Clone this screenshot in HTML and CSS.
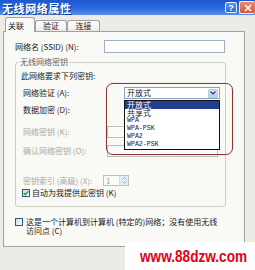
FILE: index.html
```html
<!DOCTYPE html>
<html>
<head>
<meta charset="utf-8">
<link rel="stylesheet" href="styles.css">
</head>
<body>
<div class="win">
  <div class="titlebar">
    <span class="title">无线网络属性</span>
    <span class="tb-btns">
      <span class="tbtn help">?</span>
      <span class="tbtn close"><svg width="14" height="12" viewBox="0 0 14 12"><path d="M4 3 L10 9 M10 3 L4 9" stroke="#fff" stroke-width="1.6" fill="none"/></svg></span>
    </span>
  </div>
  <div class="client">
    <div class="tabs">
      <div class="tab active">关联</div>
      <div class="tab t2">验证</div>
      <div class="tab t3">连接</div>
    </div>
    <div class="panel">
      <div class="row ssid">
        <span class="lbl w-ssid">网络名 (SSID) (N):</span>
        <span class="textbox ssid-box"></span>
      </div>
      <fieldset class="group">
        <legend>无线网络密钥</legend>
        <div class="line">此网络要求下列密钥:</div>
        <div class="row r2">
          <span class="lbl w-combo">网络验证 (A):</span>
          <span class="combo">开放式<span class="arrow"><svg width="6" height="4" viewBox="0 0 6 4"><path d="M0.5 0.5 L3 3 L5.5 0.5" stroke="#2a3a66" stroke-width="1.2" fill="none"/></svg></span></span>
        </div>
        <div class="row r3">
          <span class="lbl w-combo">数据加密 (D):</span>
          <span class="combo"><span class="arrow"></span></span>
        </div>
        <div class="row r4">
          <span class="lbl w-tb dis">网络密钥 (K):</span>
          <span class="textbox dbox"></span>
        </div>
        <div class="row r5">
          <span class="lbl w-tb dis">确认网络密钥 (O):</span>
          <span class="textbox dbox"></span>
        </div>
        <div class="row r6">
          <span class="lbl w-spin dis">密钥索引 (高级) (X):</span>
          <span class="spin"><span class="spin-val">1</span><span class="spin-btn"><svg width="7" height="9" viewBox="0 0 7 9"><path d="M1.5 3.5 L3.5 1.5 L5.5 3.5 M1.5 5.5 L3.5 7.5 L5.5 5.5" stroke="#9fb2d8" stroke-width="1" fill="none"/></svg></span></span>
        </div>
        <div class="row r7">
          <span class="cb"><svg width="6" height="6" viewBox="0 0 6 6"><path d="M0.8 3 L2.4 4.6 L5.3 1.2" stroke="#21a121" stroke-width="1.4" fill="none"/></svg></span>
          <span class="cbtext">自动为我提供此密钥 (K)</span>
        </div>
      </fieldset>
      <div class="adhoc">
        <span class="cb"></span>
        <span class="adtext">这是一个计算机到计算机 (特定的)网络；没有使用无线<br>访问点 (C)</span>
      </div>
    </div>
  </div>
  <div class="list">
    <div class="item sel">开放式</div>
    <div class="item">共享式</div>
    <div class="item lat">WPA</div>
    <div class="item lat">WPA-PSK</div>
    <div class="item lat">WPA2</div>
    <div class="item lat">WPA2-PSK</div>
  </div>
  <div class="annot"></div>
  <div class="wm"><span>www.88dzw.com</span></div>
</div>
</body>
</html>
```

FILE: styles.css
```css
* { box-sizing: border-box; }
html, body { margin: 0; padding: 0; }
body {
  width: 255px;
  height: 270px;
  overflow: hidden;
  font-family: "Noto Sans CJK SC", sans-serif;
  font-size: 8px;
  color: #1a1a1a;
}
.win {
  position: relative;
  width: 255px;
  height: 270px;
  background: #ecebe5;
  overflow: hidden;
}
.titlebar {
  height: 15px;
  display: flex;
  align-items: flex-start;
  justify-content: space-between;
  padding-left: 2px;
  background: linear-gradient(#1c58d0, #2a6ade 55%, #5a8fe8);
}
.title {
  display: block;
  height: 15px;
  color: #fff;
  font-weight: bold;
  font-size: 11px;
  line-height: 16px;
  letter-spacing: 0.6px;
  text-shadow: 1px 1px 0 #0b3390;
  white-space: nowrap;
}
.tb-btns {
  display: flex;
  gap: 2px;
  margin-top: 1px;
}
.tbtn {
  display: flex;
  align-items: center;
  justify-content: center;
  height: 12px;
  border: 1px solid #e8eefa;
  border-radius: 2px;
  color: #fff;
  font: bold 9px/10px "Liberation Sans", sans-serif;
}
.help {
  width: 12px;
  margin-top: 1px;
  height: 11px;
  background: linear-gradient(#5a92f0, #2f6ae0);
}
.close {
  width: 16px;
  height: 13px;
  border-right: none;
  background: linear-gradient(#ee8a6a, #d9573a);
}
.client {
  padding: 2px 0 0 3px;
}
.tabs {
  display: flex;
  align-items: flex-end;
  height: 15px;
  margin-bottom: -1px;
  padding-left: 2px;
  position: relative;
  z-index: 1;
}
.tab {
  height: 11px;
  margin-bottom: 1px;
  border: 1px solid #9ba3a6;
  border-bottom: none;
  border-radius: 3px 3px 0 0;
  background: linear-gradient(#ffffff, #ecebe6);
  line-height: 10px;
  text-align: center;
}
.tab.active {
  width: 30px;
  height: 15px;
  margin-bottom: 0;
  padding-top: 3px;
  padding-left: 2px;
  text-align: left;
  background: #f9f9f6;
}
.t2 { width: 32px; }
.t3 { width: 33px; }
.panel {
  width: 242px;
  height: 216px;
  border: 1px solid #9ba3a6;
  background: #f9f9f6;
  padding: 8px 0 0 11px;
}
.row {
  display: flex;
  align-items: center;
}
.lbl {
  line-height: 10px;
  white-space: nowrap;
  flex: none;
}
.w-ssid { width: 89px; }
.textbox {
  display: block;
  height: 12px;
  border: 1px solid #9fb0c2;
  background: #fff;
}
.ssid-box {
  width: 121px;
  height: 13px;
}
.group {
  width: 211px;
  margin: 4px 0 0;
  padding: 4px 0 8px 5px;
  border: 1px solid #cfcfc2;
  border-radius: 3px;
  min-width: 0;
}
.group legend {
  padding: 0 1px;
  margin-left: -2px;
  line-height: 10px;
  color: #5a5e66;
}
.line {
  line-height: 10px;
}
.r2 { margin-top: 6px; }
.r3 { margin-top: 5px; }
.r4 { margin-top: 10px; }
.r5 { margin-top: 7px; }
.r6 { margin-top: 18px; }
.r7 { margin-top: 2px; height: 10px; }
.w-combo { width: 101px; margin-left: 2px; }
.w-tb { width: 84px; margin-left: 2px; }
.w-spin { width: 80px; margin-left: 2px; }
.dis { color: #aaa9a0; }
.combo {
  display: flex;
  align-items: center;
  width: 96px;
  height: 12px;
  border: 1px solid #8aa2bd;
  background: #fff;
  padding-left: 2px;
  padding-right: 1px;
  line-height: 10px;
}
.combo .arrow {
  margin-left: auto;
  width: 10px;
  height: 9px;
  display: flex;
  align-items: center;
  justify-content: center;
  background: linear-gradient(#dbe5fb, #bccdf2);
  border: 1px solid #b7c7ea;
  border-radius: 1px;
}
.dbox {
  width: 111px;
  border-color: #c0c0b8;
  background: #fbfbf9;
}
.spin {
  display: flex;
  width: 26px;
  height: 11px;
  border: 1px solid #c0c0b8;
  background: #fbfbf9;
}
.spin-val {
  padding-left: 2px;
  line-height: 9px;
  color: #aaa9a0;
}
.spin-btn {
  margin-left: auto;
  width: 9px;
  display: flex;
  align-items: center;
  justify-content: center;
  background: #e6ecf6;
  border-left: 1px solid #d2daea;
}
.cb {
  display: flex;
  align-items: center;
  justify-content: center;
  flex: none;
  width: 8px;
  height: 8px;
  border: 1px solid #2a5a8a;
  background: linear-gradient(135deg, #dcdcd4, #fbfbf8);
}
.r7 .cb { margin-left: 1px; }
.cbtext {
  margin-left: 2px;
  line-height: 10px;
}
.adhoc {
  display: flex;
  align-items: flex-start;
  margin-top: 10px;
}
.adhoc .cb { margin-top: 1px; }
.adtext {
  margin-left: 3px;
  line-height: 9px;
  white-space: nowrap;
}
.list {
  position: absolute;
  left: 124px;
  top: 100px;
  width: 96px;
  height: 50px;
  border: 1px solid #111;
  background: #fff;
  z-index: 3;
}
.item {
  height: 8px;
  line-height: 8px;
  padding-left: 2px;
  white-space: nowrap;
}
.item.sel {
  background: #223f8e;
  color: #fff;
}
.item.lat {
  font-family: "Liberation Mono", monospace;
  font-size: 6.6px;
}
.annot {
  position: absolute;
  left: 106px;
  top: 83px;
  width: 127px;
  height: 72px;
  border: 1px solid #8e3636;
  border-radius: 7px;
  box-shadow: 0 0 1px rgba(170, 70, 70, 0.6);
  z-index: 4;
}
.wm {
  position: absolute;
  left: 125px;
  top: 242px;
  width: 130px;
  height: 28px;
  background: rgba(255, 255, 255, 0.94);
  padding: 6px 0 0 15px;
  z-index: 5;
}
.wm span {
  display: inline-block;
  font: bold 17px/17px "Liberation Sans", sans-serif;
  color: #e3001b;
  transform: scaleX(0.8);
  transform-origin: 0 0;
  white-space: nowrap;
}
```
